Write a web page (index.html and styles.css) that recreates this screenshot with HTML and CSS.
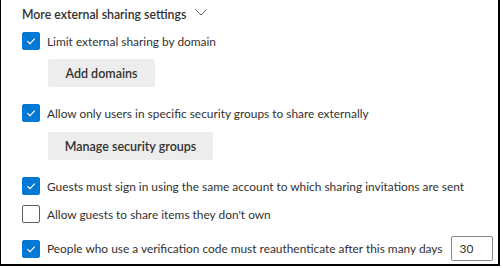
FILE: index.html
```html
<!DOCTYPE html>
<html lang="en">
<head>
    <meta charset="UTF-8">
    <title>More external sharing settings</title>
    <link rel="stylesheet" href="styles.css">
</head>
<body>
    <div class="panel">
        <div class="heading">
            <span>More external sharing settings</span>
            <svg class="chevron" viewBox="0 0 12 7" width="12" height="7" aria-hidden="true">
                <path d="M0.5 0.5 L6 6 L11.5 0.5" fill="none" stroke="#605e5c" stroke-width="1"></path>
            </svg>
        </div>

        <label class="option first">
            <span class="box checked">
                <svg viewBox="0 0 12 12" width="12" height="12"><path d="M2.5 6.2 L5 8.6 L9.8 3.6" fill="none" stroke="#fff" stroke-width="1.2"></path></svg>
            </span>
            <span class="text">Limit external sharing by domain</span>
        </label>
        <button class="action btn-domains">Add domains</button>

        <label class="option spaced">
            <span class="box checked">
                <svg viewBox="0 0 12 12" width="12" height="12"><path d="M2.5 6.2 L5 8.6 L9.8 3.6" fill="none" stroke="#fff" stroke-width="1.2"></path></svg>
            </span>
            <span class="text">Allow only users in specific security groups to share externally</span>
        </label>
        <button class="action btn-groups">Manage security groups</button>

        <label class="option spaced">
            <span class="box checked">
                <svg viewBox="0 0 12 12" width="12" height="12"><path d="M2.5 6.2 L5 8.6 L9.8 3.6" fill="none" stroke="#fff" stroke-width="1.2"></path></svg>
            </span>
            <span class="text">Guests must sign in using the same account to which sharing invitations are sent</span>
        </label>

        <label class="option tight">
            <span class="box"></span>
            <span class="text">Allow guests to share items they don't own</span>
        </label>

        <label class="option last">
            <span class="box checked">
                <svg viewBox="0 0 12 12" width="12" height="12"><path d="M2.5 6.2 L5 8.6 L9.8 3.6" fill="none" stroke="#fff" stroke-width="1.2"></path></svg>
            </span>
            <span class="text">People who use a verification code must reauthenticate after this many days</span>
            <span class="days">30</span>
        </label>
    </div>
</body>
</html>
```

FILE: styles.css
```css
body {
    margin: 0;
    padding: 0;
    background-color: white;
}
.panel {
    width: 500px;
    height: 266px;
    box-sizing: border-box;
    border-left: 1px solid black;
    border-right: 2px solid black;
    border-bottom: 2px solid black;
    padding-left: 21px;
    display: flex;
    flex-direction: column;
    align-items: flex-start;
    font-family: 'Lato', sans-serif;
    color: #323130;
    font-size: 11.9px;
    white-space: nowrap;
}
.heading {
    height: 28px;
    display: flex;
    align-items: center;
    gap: 9px;
    font-size: 12.3px;
    font-weight: 600;
}
.chevron {
    margin-top: -3px;
}
.option {
    height: 20px;
    display: flex;
    align-items: center;
    gap: 7px;
}
.first {
    margin-top: 3px;
}
.spaced {
    margin-top: 16px;
}
.tight {
    margin-top: 8px;
}
.last {
    height: 25px;
    margin-top: 12px;
}
.box {
    width: 18px;
    height: 18px;
    box-sizing: border-box;
    border: 1px solid #605e5c;
    border-radius: 2px;
    display: flex;
    align-items: center;
    justify-content: center;
    flex-shrink: 0;
}
.box.checked {
    background-color: #0078d4;
    border-color: #0078d4;
}
.action {
    margin-left: 26px;
    height: 28px;
    border: none;
    border-radius: 2px;
    background-color: #ededed;
    color: #323130;
    font-family: 'Lato', sans-serif;
    font-size: 12.5px;
    font-weight: 600;
    padding: 0;
    white-space: nowrap;
}
.btn-domains {
    margin-top: 8px;
    width: 107px;
}
.btn-groups {
    margin-top: 9px;
    width: 165px;
}
.days {
    margin-left: 1px;
    width: 42px;
    height: 25px;
    box-sizing: border-box;
    border: 1px solid #8a8886;
    border-radius: 2px;
    padding-left: 8px;
    display: flex;
    align-items: center;
}
```
